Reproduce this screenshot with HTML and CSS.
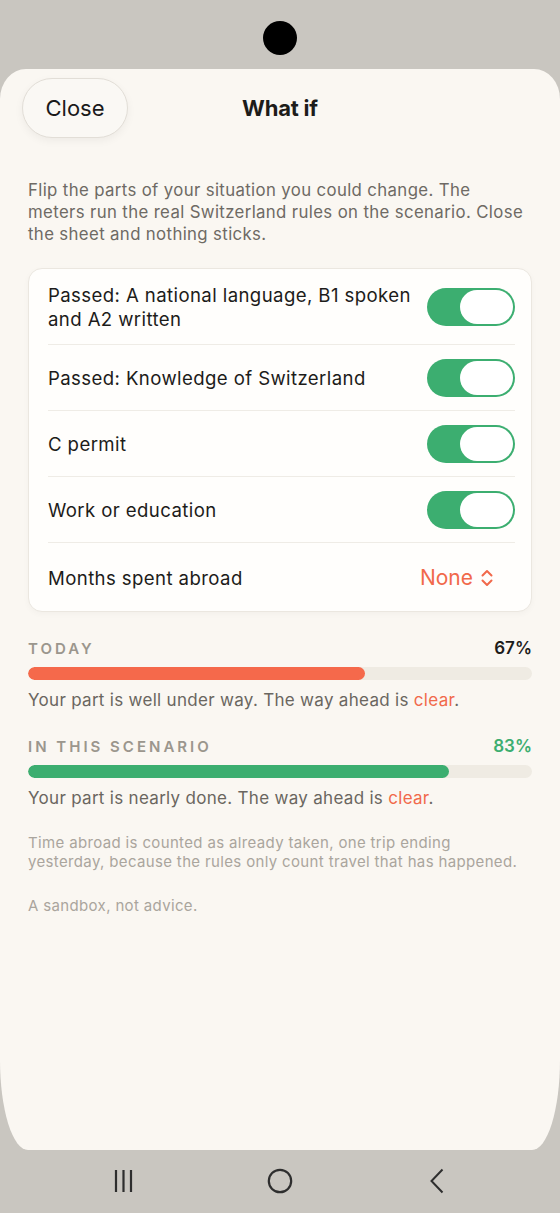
FILE: index.html
```html
<!DOCTYPE html>
<html lang="en">
<head>
  <meta charset="UTF-8">
  <meta name="viewport" content="width=device-width, initial-scale=1">
  <title>What if</title>
  <link rel="stylesheet" href="styles.css">
</head>
<body>
  <div class="status">
    <span class="camera"></span>
  </div>

  <main class="sheet">
    <header class="sheet-head">
      <button class="close-btn">Close</button>
      <h1>What if</h1>
      <span></span>
    </header>

    <p class="intro">Flip the parts of your situation you could change. The meters run the real Switzerland rules on the scenario. Close the sheet and nothing sticks.</p>

    <section class="card">
      <div class="row">
        <span class="row-label">Passed: A national language, B1 spoken and A2 written</span>
        <span class="toggle on"><span class="knob"></span></span>
      </div>
      <div class="row">
        <span class="row-label">Passed: Knowledge of Switzerland</span>
        <span class="toggle on"><span class="knob"></span></span>
      </div>
      <div class="row">
        <span class="row-label">C permit</span>
        <span class="toggle on"><span class="knob"></span></span>
      </div>
      <div class="row">
        <span class="row-label">Work or education</span>
        <span class="toggle on"><span class="knob"></span></span>
      </div>
      <div class="row row-picker">
        <span class="row-label">Months spent abroad</span>
        <span class="picker">None
          <svg width="14" height="20" viewBox="0 0 14 20"><path d="M2.5 7.5 L7 3 L11.5 7.5 M2.5 12.5 L7 17 L11.5 12.5" fill="none" stroke="currentColor" stroke-width="2" stroke-linecap="round" stroke-linejoin="round"/></svg>
        </span>
      </div>
    </section>

    <section class="meter">
      <div class="meter-head">
        <span class="meter-label">Today</span>
        <span class="meter-value">67%</span>
      </div>
      <div class="bar"><div class="fill fill-orange" style="width:66.8%"></div></div>
      <p class="meter-note">Your part is well under way. The way ahead is <span class="accent">clear</span>.</p>
    </section>

    <section class="meter">
      <div class="meter-head">
        <span class="meter-label">In this scenario</span>
        <span class="meter-value green">83%</span>
      </div>
      <div class="bar"><div class="fill fill-green" style="width:83.5%"></div></div>
      <p class="meter-note">Your part is nearly done. The way ahead is <span class="accent">clear</span>.</p>
    </section>

    <p class="foot">Time abroad is counted as already taken, one trip ending yesterday, because the rules only count travel that has happened.</p>
    <p class="foot sandbox">A sandbox, not advice.</p>
  </main>

  <nav class="navbar">
    <svg width="19" height="24" viewBox="0 0 19 24"><path d="M2 1 V23 M9.5 1 V23 M17 1 V23" stroke="#2e2e2e" stroke-width="2.2"/></svg>
    <svg width="26" height="26" viewBox="0 0 26 26"><circle cx="13" cy="13" r="11.2" fill="none" stroke="#2e2e2e" stroke-width="2.2"/></svg>
    <svg width="16" height="26" viewBox="0 0 16 26"><path d="M13.5 1.5 L2.5 13 L13.5 24.5" fill="none" stroke="#2e2e2e" stroke-width="2"/></svg>
  </nav>
</body>
</html>
```

FILE: styles.css
```css
/* Base */
* {
  margin: 0;
  padding: 0;
  box-sizing: border-box;
}
body {
  font-family: Inter, "Noto Sans", sans-serif;
  background: #c9c6c0;
  width: 560px;
  height: 1213px;
  display: flex;
  flex-direction: column;
  overflow: hidden;
  color: #1d1c1a;
}

/* Phone chrome */
.status {
  height: 69px;
  display: flex;
  justify-content: center;
  align-items: flex-start;
  padding-top: 21px;
}
.camera {
  width: 34px;
  height: 34px;
  border-radius: 50%;
  background: #000;
}
.navbar {
  height: 63px;
  display: grid;
  grid-template-columns: repeat(3, 157px);
  justify-content: center;
  justify-items: center;
  align-items: center;
  padding-bottom: 2px;
}

/* Sheet */
.sheet {
  height: 1081px;
  background: #faf7f2;
  border-radius: 26px 26px 28px 28px / 30px 30px 90px 90px;
  padding: 9px 28px 0;
}
.sheet-head {
  display: grid;
  grid-template-columns: 1fr auto 1fr;
  align-items: center;
  margin: 0 -6px;
}
.close-btn {
  justify-self: start;
  width: 106px;
  height: 60px;
  border-radius: 30px;
  border: 1px solid #e2ded7;
  background: #faf8f4;
  box-shadow: 0 3px 8px rgba(0, 0, 0, 0.05);
  font-family: inherit;
  font-size: 22px;
  color: #1a1a1a;
}
.sheet-head h1 {
  font-size: 22px;
  font-weight: 700;
  letter-spacing: -0.2px;
}

.intro {
  margin-top: 41px;
  max-width: 502px;
  font-size: 16.8px;
  line-height: 22px;
  letter-spacing: 0.36px;
  color: #6e6a64;
}

/* Toggles card */
.card {
  margin-top: 23px;
  background: #fffefc;
  border: 1px solid #ebe7e0;
  border-radius: 14px;
  padding: 0 16px 0 19px;
  box-shadow: 0 2px 6px rgba(0, 0, 0, 0.03);
}
.row {
  display: flex;
  align-items: center;
  justify-content: space-between;
  gap: 10px;
  padding: 14px 0 13px;
}
.row + .row {
  border-top: 1px solid #efece6;
}
.row-picker {
  padding: 22px 0 21px;
}
.row-label {
  font-size: 18.6px;
  line-height: 24px;
  letter-spacing: 0.4px;
  color: #1d1c1a;
}
.toggle {
  flex: none;
  width: 88px;
  height: 38px;
  border-radius: 19px;
  background: #3cae70;
  padding: 2px;
  display: flex;
  justify-content: flex-end;
}
.knob {
  width: 53px;
  height: 34px;
  border-radius: 17px;
  background: #fff;
}
.picker {
  display: flex;
  align-items: center;
  gap: 7px;
  margin-right: 21px;
  font-size: 21px;
  color: #f1694b;
}

/* Meters */
.meter {
  margin-top: 26px;
}
.meter + .meter {
  margin-top: 25px;
}
.meter-head {
  display: flex;
  justify-content: space-between;
  align-items: center;
  height: 20px;
}
.meter-label {
  font-size: 15px;
  font-weight: 600;
  letter-spacing: 3px;
  text-transform: uppercase;
  color: #9b968d;
}
.meter-value {
  font-size: 17px;
  font-weight: 600;
  color: #1d1c1a;
}
.meter-value.green {
  color: #3cae70;
}
.bar {
  margin-top: 9px;
  height: 13px;
  border-radius: 7px;
  background: #efebe3;
  overflow: hidden;
}
.fill {
  height: 100%;
  border-radius: 7px;
}
.fill-orange {
  background: #f5694b;
}
.fill-green {
  background: #3cae70;
}
.meter-note {
  margin-top: 9px;
  font-size: 17px;
  line-height: 22px;
  letter-spacing: 0.3px;
  color: #6a6660;
}
.accent {
  color: #f1694b;
}

.foot {
  margin-top: 24px;
  font-size: 15px;
  line-height: 19px;
  letter-spacing: 0.35px;
  color: #aaa59d;
}
.sandbox {
  margin-top: 25px;
}
```
